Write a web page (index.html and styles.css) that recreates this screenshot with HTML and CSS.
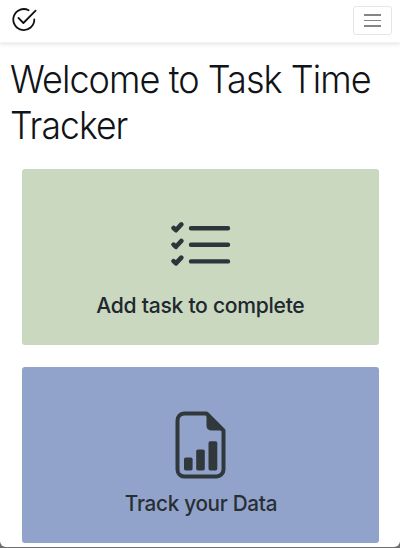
FILE: index.html
```html
<!DOCTYPE html>
<html lang="en">
<head>
<meta charset="utf-8">
<title>Task Time Tracker</title>
<link rel="stylesheet" href="styles.css">
</head>
<body>
<div class="window">
  <header class="navbar">
    <svg class="logo" viewBox="0 0 26 26" aria-hidden="true">
      <path d="M17.6 3.2A10.5 10.5 0 1 0 23.3 12.5"/>
      <path d="M7.4 10.9L12.4 16L24.6 3.6"/>
    </svg>
    <button class="toggler" aria-label="Toggle navigation"><span></span><span></span><span></span></button>
  </header>
  <main>
    <h1><span class="line-one">Welcome to Task Time</span> <span class="line-two">Tracker</span></h1>
    <a class="card card-add">
      <svg class="icon-list" viewBox="0 0 62 48" aria-hidden="true">
        <path class="bar" d="M21 8.2H58M21 24.8H58M21 41.4H58"/>
        <path class="check" d="M3.6 8L5.9 10.2L11.3 4.4M3.6 24.6L5.9 26.8L11.3 21M3.6 41.2L5.9 43.4L11.3 37.6"/>
      </svg>
      <span class="label label-add">Add task to complete</span>
    </a>
    <a class="card card-data">
      <svg class="icon-file" viewBox="0 0 52 68" aria-hidden="true">
        <path class="outline" d="M9 2.5H31.5L48.5 19.5V58.5A7 7 0 0 1 41.5 65.5H9A7 7 0 0 1 2.5 58.5V9.5A7 7 0 0 1 9 2.5Z"/>
        <path d="M31.5 2V14.2Q31.5 19.5 37 19.5H49.5Z"/>
        <rect x="9" y="46.5" width="8.6" height="13" rx="1.8"/>
        <rect x="21.2" y="38.5" width="8.6" height="21" rx="1.8"/>
        <rect x="33.5" y="30.3" width="8.8" height="29.2" rx="1.8"/>
      </svg>
      <span class="label label-data">Track your Data</span>
    </a>
  </main>
</div>
</body>
</html>
```
FILE: styles.css
```css
* { box-sizing: border-box; }
html { background: #6e6e6e; }
body { margin: 0; height: 548px; overflow: hidden; font-family: Inter, "Liberation Sans", sans-serif; color: #101317; }
.window { height: 547px; background: #fff; border-radius: 0 0 6px 6px; overflow: hidden; }
.navbar { height: 43px; display: flex; align-items: flex-start; justify-content: space-between; padding: 6px 8px 0 11px; border-bottom: 1px solid #f2f2f2; box-shadow: 0 1px 5px rgba(0, 0, 0, .12); }
.logo { width: 26px; height: 26px; margin-top: 1px; fill: none; stroke: #111; stroke-width: 1.8; stroke-linecap: round; stroke-linejoin: round; }
.toggler { width: 39px; height: 29px; padding: 0; border: 1px solid #e6e6e6; border-radius: 3px; background: #fff; display: flex; flex-direction: column; align-items: center; justify-content: center; gap: 4px; }
.toggler span { width: 17px; height: 1.5px; background: #858585; }
main { display: flex; flex-direction: column; padding: 13px 21px 0 22px; }
h1 { margin: 0 -21px 21px -12px; font-size: 38.4px; line-height: 46px; font-weight: 300; white-space: nowrap; }
h1 span { display: block; transform-origin: 0 50%; letter-spacing: -1px; }
.line-one { transform: scaleX(.938); }
.line-two { transform: scaleX(.924); }
.card { height: 176px; margin-bottom: 22px; flex: none; border-radius: 3px; display: flex; flex-direction: column; align-items: center; }
.card-add { background: #c9d8bf; padding-top: 51px; }
.card-data { background: #92a3cb; padding-top: 44px; }
.icon-list { width: 62px; height: 48px; fill: none; stroke: #2c353b; stroke-linecap: round; stroke-linejoin: round; }
.bar { stroke-width: 4.4; }
.check { stroke-width: 4.6; }
.icon-file { width: 52px; height: 68px; fill: #30383b; }
.outline { fill: none; stroke: #30383b; stroke-width: 4; stroke-linejoin: round; }
.label { font-size: 22px; line-height: 28px; font-weight: 500; white-space: nowrap; letter-spacing: -.3px; }
.label-add { margin-top: 23px; color: #20272e; transform: scaleX(.96); }
.label-data { margin-top: 10px; color: #282f33; transform: scaleX(.94); }
```
